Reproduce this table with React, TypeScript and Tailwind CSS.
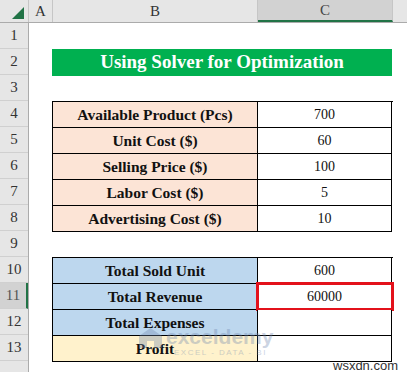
import React from 'react';

const ROWS = [1, 2, 3, 4, 5, 6, 7, 8, 9, 10, 11, 12, 13, 14];

const inputs = [
  { label: 'Available Product (Pcs)', value: '700' },
  { label: 'Unit Cost ($)', value: '60' },
  { label: 'Selling Price ($)', value: '100' },
  { label: 'Labor Cost ($)', value: '5' },
  { label: 'Advertising Cost ($)', value: '10' },
];

const results = [
  { label: 'Total Sold Unit', value: '600', bg: 'bg-[#bdd7ee]' },
  { label: 'Total Revenue', value: '60000', bg: 'bg-[#bdd7ee]', selected: true },
  { label: 'Total Expenses', value: '', bg: 'bg-[#bdd7ee]' },
  { label: 'Profit', value: '', bg: 'bg-[#fff2cc]' },
];

function TableRow({ label, value, bg, selected }: { label: string; value: string; bg: string; selected?: boolean }) {
  return (
    <div className="flex h-[26px]">
      <div className={`w-[205px] ${bg} border-l border-b border-black flex items-center justify-center font-bold text-[15.5px] text-[#111]`}>
        {label}
      </div>
      <div className="relative w-[135px] border-l border-r border-b border-black flex items-center justify-center text-[14px] text-[#111] bg-white">
        {value}
        {selected && <div className="absolute -left-[2px] -top-[2px] w-[138px] h-[29px] border-[3px] border-[#e3111b]" />}
      </div>
    </div>
  );
}

export default function App() {
  return (
    <div className="relative w-[407px] h-[372px] overflow-hidden bg-white font-['Liberation_Serif',serif]">
      {/* column headers */}
      <div className="flex h-[23px] bg-[#e6e6e6] border-b border-[#ababab] text-[15px] text-[#333]">
        <div className="w-[29px] border-r border-[#c6c6c6] flex items-end justify-end pr-[4px] pb-[3px]">
          <svg width="12" height="12" viewBox="0 0 12 12">
            <polygon points="12,0 12,12 0,12" fill="#217346" />
          </svg>
        </div>
        <div className="w-[24px] border-r border-[#c6c6c6] flex items-center justify-center">A</div>
        <div className="w-[205px] border-r border-[#c6c6c6] flex items-center justify-center">B</div>
        <div className="w-[135px] bg-[#d2d2d2] border-r border-[#c6c6c6] border-b-2 border-b-[#217346] flex items-center justify-center text-[#444]">C</div>
        <div className="flex-1" />
      </div>

      <div className="flex">
        {/* row headers */}
        <div className="w-[29px] bg-[#e6e6e6] border-r border-[#ababab] text-[15px] text-[#333]">
          {ROWS.map((r) => (
            <div
              key={r}
              className={`h-[26px] border-b border-[#d0d0d0] flex items-center justify-center ${r === 11 ? 'bg-[#d2d2d2] border-r-2 border-r-[#217346] text-[#555]' : ''}`}
            >
              {r < 14 ? r : ''}
            </div>
          ))}
        </div>

        {/* sheet */}
        <div className="flex-1 pl-[23px]">
          <div className="h-[26px]" />
          <div className="h-[27px] w-[340px] bg-[#00b050] flex items-center justify-center text-white font-bold text-[19px]">
            Using Solver for Optimization
          </div>
          <div className="h-[25px]" />
          <div className="border-t border-black w-[341px]">
            {inputs.map((r) => (
              <TableRow key={r.label} label={r.label} value={r.value} bg="bg-[#fce4d6]" />
            ))}
          </div>
          <div className="h-[25px]" />
          <div className="border-t border-black w-[341px]">
            {results.map((r) => (
              <TableRow key={r.label} label={r.label} value={r.value} bg={r.bg} selected={r.selected} />
            ))}
          </div>
        </div>
      </div>

      {/* watermark */}
      <div className="absolute left-[138px] top-[326px] flex items-start gap-[3px] opacity-35 pointer-events-none">
        <svg width="25" height="22" viewBox="0 0 25 22" className="mt-[1px]">
          <path d="M12.5 1 L24 9 L24 21 L16 21 L16 14 L9 14 L9 21 L1 21 L1 9 Z" fill="#6f86ad" />
        </svg>
        <div className="flex flex-col leading-none font-['Liberation_Sans',sans-serif]">
          <span className="text-[21px] font-bold text-[#6f86ad]">exceldemy</span>
          <span className="text-[8px] text-[#6f86ad] tracking-[1.5px] mt-[2px] pl-[8px]">EXCEL - DATA - BI</span>
        </div>
      </div>
      <div className="absolute left-[333px] top-[356px] text-[13px] text-[#333] font-['Liberation_Sans',sans-serif]">
        wsxdn.com
      </div>
    </div>
  );
}
